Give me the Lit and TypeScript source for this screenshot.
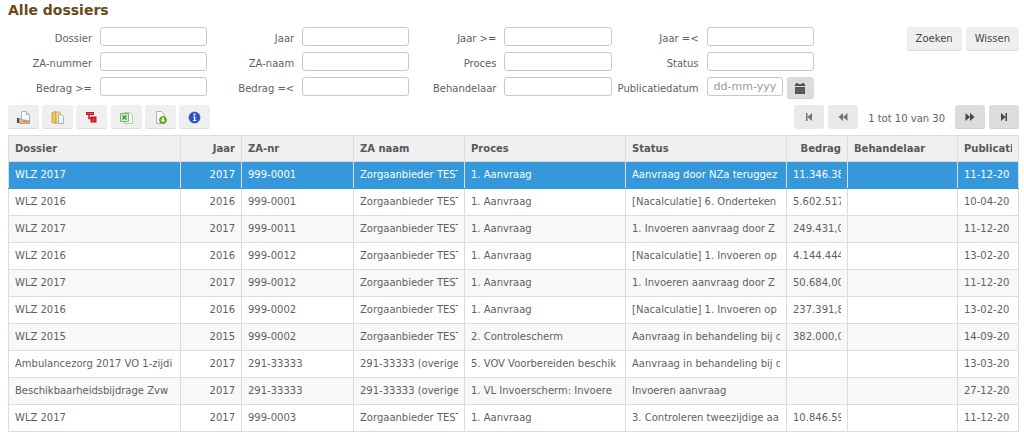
import { LitElement, html, css, svg } from "lit";
import { customElement } from "lit/decorators.js";
import { classMap } from "lit/directives/class-map.js";

type Column = { label: string; width: number; numeric?: boolean };

const FIELDS: string[] = [
  "Dossier", "Jaar", "Jaar >=", "Jaar =<",
  "ZA-nummer", "ZA-naam", "Proces", "Status",
  "Bedrag >=", "Bedrag =<", "Behandelaar",
];

const COLUMNS: Column[] = [
  { label: "Dossier", width: 172 },
  { label: "Jaar", width: 61, numeric: true },
  { label: "ZA-nr", width: 112 },
  { label: "ZA naam", width: 111 },
  { label: "Proces", width: 161 },
  { label: "Status", width: 161 },
  { label: "Bedrag", width: 61, numeric: true },
  { label: "Behandelaar", width: 110 },
  { label: "Publicati", width: 61 },
];
const TOTAL = COLUMNS.reduce((sum, c) => sum + c.width, 0);

const ROWS: string[][] = [
  ["WLZ 2017", "2017", "999-0001", "Zorgaanbieder TEST", "1. Aanvraag", "Aanvraag door NZa teruggez", "11.346.38", "", "11-12-20"],
  ["WLZ 2016", "2016", "999-0001", "Zorgaanbieder TEST", "1. Aanvraag", "[Nacalculatie] 6. Onderteken", "5.602.517", "", "10-04-20"],
  ["WLZ 2017", "2017", "999-0011", "Zorgaanbieder TEST", "1. Aanvraag", "1. Invoeren aanvraag door Z", "249.431,0", "", "11-12-20"],
  ["WLZ 2016", "2016", "999-0012", "Zorgaanbieder TEST", "1. Aanvraag", "[Nacalculatie] 1. Invoeren op", "4.144.444", "", "13-02-20"],
  ["WLZ 2017", "2017", "999-0012", "Zorgaanbieder TEST", "1. Aanvraag", "1. Invoeren aanvraag door Z", "50.684,00", "", "11-12-20"],
  ["WLZ 2016", "2016", "999-0002", "Zorgaanbieder TEST", "1. Aanvraag", "[Nacalculatie] 1. Invoeren op", "237.391,8", "", "13-02-20"],
  ["WLZ 2015", "2015", "999-0002", "Zorgaanbieder TEST", "2. Controlescherm", "Aanvraag in behandeling bij d", "382.000,0", "", "14-09-20"],
  ["Ambulancezorg 2017 VO 1-zijdi", "2017", "291-33333", "291-33333 (overige", "5. VOV Voorbereiden beschik", "Aanvraag in behandeling bij d", "", "", "13-03-20"],
  ["Beschikbaarheidsbijdrage Zvw", "2017", "291-33333", "291-33333 (overige", "1. VL Invoerscherm: Invoere", "Invoeren aanvraag", "", "", "27-12-20"],
  ["WLZ 2017", "2017", "999-0003", "Zorgaanbieder TEST", "1. Aanvraag", "3. Controleren tweezijdige aa", "10.846.59", "", "11-12-20"],
];

const page = svg`<path d="M4.5 .5h5l3 3v9h-8z" fill="#f4f9fc" stroke="#a3b4bd"/><path d="M9.5 .5v3h3" fill="#dfe9ee" stroke="#a3b4bd"/>`;

const TOOLS = [
  { name: "Openen", art: svg`${page}<path d="M0 7h2v5H0z" fill="#33475c"/><path d="M2 8c2-1 3 0 4 1h3c1 0 1 1 0 1.5H6 9l3-1c1 0 1.300 1 .5 1.500L9 13H4l-2-1z" fill="#e5b68d" stroke="#a8703f" stroke-width=".6"/>` },
  { name: "Map", art: svg`<path d="M1 1.500 5 .5v12L1 11.500z" fill="#f3c65b" stroke="#b98a2c" stroke-width=".7"/><path d="M5 1h4v11H5z" fill="#f8dd93" stroke="#c79c43" stroke-width=".7"/><path d="M7.500 3.500h3l2 2v7h-5z" fill="#eef6fb" stroke="#8fa7b5" stroke-width=".8"/>` },
  { name: "PDF", art: svg`<path d="M1 1h8v3H1z" fill="#c9131f"/><path d="M2 2.500h6" stroke="#ef9297" stroke-width=".6"/><path d="M4 4v3.500h2" fill="none" stroke="#c9131f" stroke-width="1.500"/><path d="M5.500 5.500h6v6h-6z" fill="#c9131f"/><path d="M7 10c1-1 1.500-2 1.500-3 .3 1.500 1 2 2 2-1.500 0-2.500.2-3.500 1z" fill="none" stroke="#e88b90" stroke-width=".4"/>` },
  { name: "Excel", art: svg`<path d="M4.500 1.500h5l3 3v8h-8z" fill="#f7faf7" stroke="#a9b8a9" stroke-width=".8"/><path d="M.5 2.500h8v8h-8z" fill="#d8edd2" stroke="#5aa55a" stroke-width=".8"/><path d="m2.500 4.500 4 4M6.500 4.500l-4 4" fill="none" stroke="#338a38" stroke-width="1.300"/>` },
  { name: "Downloaden", art: svg`<path d="M2.500 .5h5l3 3v9h-8z" fill="#f4f9fc" stroke="#a3b4bd"/><circle cx="9" cy="9" r="3.500" fill="#6cb52d" stroke="#4a9217" stroke-width=".7"/><path d="M8.200 6.800h1.600V9h1.400L9 11.300 6.800 9h1.400z" fill="#fff"/>` },
  { name: "Informatie", art: svg`<circle cx="6.500" cy="6.500" r="5.500" fill="#2b55d0" stroke="#1a3a9e" stroke-width=".6"/><circle cx="6.500" cy="3.500" r="1.100" fill="#fff"/><path d="M5 5.400h2.300V9H8.300v1H5V9h.9V6.300H5z" fill="#fff"/>` },
];

@customElement("app-root")
export class AppRoot extends LitElement {
  static styles = css`
    :host {
      display: block;
      padding: 2px 5px 12px 8px;
      background: #fff;
      color: #5f5f5f;
      font: 10px/16px "DejaVu Sans", Verdana, sans-serif;
    }
    * { box-sizing: border-box; }
    h1 { margin: 0 0 9px; font-size: 14px; line-height: 16px; color: #6e4817; }
    button {
      display: inline-flex;
      align-items: center;
      justify-content: center;
      height: 24px;
      padding: 0 9px;
      border: 0;
      border-radius: 3px;
      background: #efeff0;
      box-shadow: inset 0 -1px #dcdcdf;
      color: #45474b;
      font: inherit;
    }
    svg { display: block; }
    .filters { display: grid; grid-template-columns: repeat(5, minmax(0, 1fr)); row-gap: 6px; }
    .field { display: flex; gap: 8px; height: 19px; padding-right: 3px; }
    .field label { flex: 0 0 84px; padding-top: 4px; text-align: right; white-space: nowrap; }
    input {
      flex: 1;
      min-width: 0;
      height: 19px;
      padding: 0 6px;
      border: 1px solid #c6c8cc;
      border-radius: 3px;
      background: #fff;
      color: inherit;
      font: inherit;
      font-size: 11px;
    }
    input::placeholder { color: #9a9a9a; opacity: 1; }
    .date input { margin-right: -4px; }
    .date button { flex: 0 0 27px; height: 22px; padding: 0; }
    .actions { grid-column: 5; grid-row: 1 / span 2; display: flex; justify-content: flex-end; gap: 4px; }
    .bar { display: flex; justify-content: space-between; margin: 9px 0 6px; }
    .tools { display: flex; justify-content: space-between; width: 20%; min-width: 196px; }
    .tools button { width: 31px; padding: 0; }
    .pager { display: flex; gap: 4px; }
    .pager button { width: 30px; padding: 0; }
    .count { padding: 6px 6px 0; white-space: nowrap; }
    .dark { background: #dcdcdd; box-shadow: inset 0 -1px #d0d0d2; }
    .pager .off { background: #e9e9ea; color: #737477; box-shadow: none; }
    table { width: 100%; table-layout: fixed; border-collapse: collapse; }
    th, td {
      height: 27px;
      padding: 0 6px;
      border: 1px solid #dcdcdc;
      text-align: left;
      white-space: nowrap;
    }
    th { height: 26px; background: #f0f0f0; color: #56585b; }
    .clip { overflow: hidden; }
    th.numeric, td.numeric { text-align: right; }
    tbody tr:nth-child(odd) { background: #f8f8f8; }
    tbody tr:nth-child(even) { background: #fff; }
    tbody tr.selected { background: #3498db; color: #fff; }
    .selected td { border-top-color: #3498db; border-bottom-color: #3498db; }
  `;

  private pageButton(label: string, art: unknown, off = false) {
    return html`<button aria-label=${label} class=${classMap({ dark: true, off })}>
      <svg width="12" height="12" viewBox="0 0 12 12" fill="currentColor">${art}</svg>
    </button>`;
  }

  render() {
    return html`
      <h1>Alle dossiers</h1>
      <form class="filters" @submit=${(e: Event) => e.preventDefault()}>
        ${FIELDS.map((label, i) => html`
          <div class="field" style="grid-column:${(i % 4) + 1};grid-row:${Math.floor(i / 4) + 1}">
            <label for="f${i}">${label}</label><input id="f${i}" type="text">
          </div>`)}
        <div class="field date" style="grid-column:4;grid-row:3">
          <label for="date">Publicatiedatum</label>
          <input id="date" type="text" placeholder="dd-mm-yyyy">
          <button type="button" class="dark" aria-label="Kalender">
            <svg width="10" height="11" viewBox="0 0 10 11" fill="#505257">
              <path d="M0 1h1V0h2v1h4V0h2v1h1v2H0z"/><path d="M0 4h10v7H0z"/>
              <path d="M1 6.500h8M1 8.500h8" stroke="#777a7e" stroke-width=".5"/>
            </svg>
          </button>
        </div>
        <div class="actions"><button type="submit">Zoeken</button><button type="reset">Wissen</button></div>
      </form>
      <div class="bar">
        <div class="tools">
          ${TOOLS.map((t) => html`<button aria-label=${t.name}><svg width="13" height="13" viewBox="0 0 13 13">${t.art}</svg></button>`)}
        </div>
        <div class="pager">
          ${this.pageButton("Eerste", svg`<path d="M3 2h1.500v8H3zM9 2v8L4.500 6z"/>`, true)}
          ${this.pageButton("Vorige", svg`<path d="M6 2v8L1.500 6zM10.500 2v8L6 6z"/>`, true)}
          <span class="count">1 tot 10 van 30</span>
          ${this.pageButton("Volgende", svg`<path d="M1.500 2v8L6 6zM6 2v8l4.500-4z"/>`)}
          ${this.pageButton("Laatste", svg`<path d="M3 2v8l4.500-4zM7.500 2H9v8H7.500z"/>`)}
        </div>
      </div>
      <table>
        <colgroup>${COLUMNS.map((c) => html`<col style="width:${(c.width / TOTAL) * 100}%">`)}</colgroup>
        <thead><tr>${COLUMNS.map((c) => html`<th class=${classMap({ numeric: !!c.numeric })}><div class="clip">${c.label}</div></th>`)}</tr></thead>
        <tbody>
          ${ROWS.map((row, r) => html`<tr class=${classMap({ selected: r === 0 })}>
            ${row.map((cell, i) => html`<td class=${classMap({ numeric: !!COLUMNS[i].numeric })}><div class="clip">${cell}</div></td>`)}
          </tr>`)}
        </tbody>
      </table>
    `;
  }
}
